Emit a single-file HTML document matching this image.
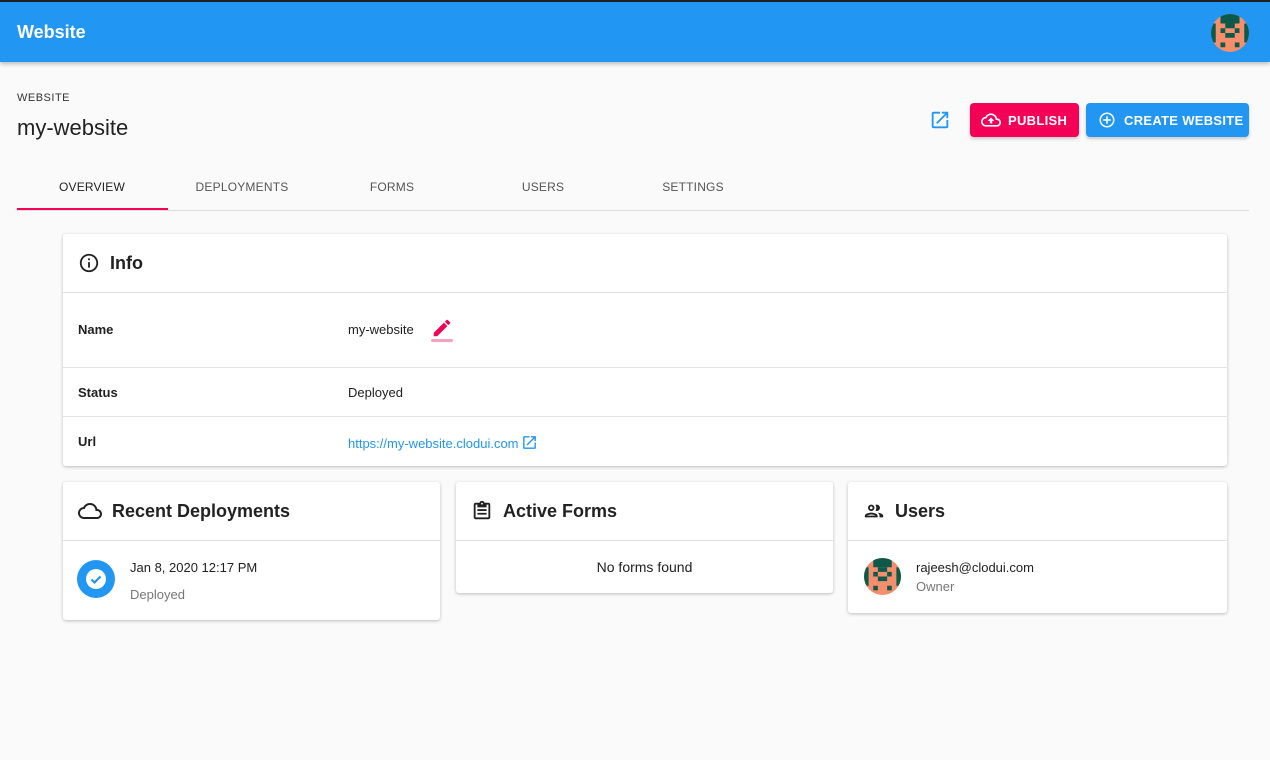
<!DOCTYPE html>
<html><head><style>
*{box-sizing:border-box;margin:0;padding:0}
body{width:1270px;height:760px;overflow:hidden;background:#fafafa;font-family:"Liberation Sans",Roboto,sans-serif;color:#212121;position:relative}
.bar{position:absolute;left:0;top:0;width:1270px;height:62px;background:#2196f3;border-top:2px solid #1f1f1f;box-shadow:0 2px 4px rgba(0,0,0,.25)}
.bar .t{position:absolute;left:17px;top:20px;color:#fff;font-size:18px;font-weight:bold}
.av{position:absolute;border-radius:50%;overflow:hidden}
.abs{position:absolute}
.btn{position:absolute;top:103px;height:34px;border-radius:4px;color:#fff;font-size:13px;font-weight:bold;letter-spacing:.3px;white-space:nowrap;display:flex;align-items:center;box-shadow:0 2px 3px rgba(0,0,0,.2)}
.tab{position:absolute;top:180px;width:150px;text-align:center;font-size:12px;color:#555;letter-spacing:.2px}
.card{position:absolute;background:#fff;box-shadow:0 1px 3px rgba(0,0,0,.25);border-radius:3px}
.hd{height:59px;border-bottom:1px solid #e4e4e4;display:flex;align-items:center;padding-left:15px;font-size:18px;font-weight:bold;color:#222}
.hd svg{margin-right:10px}
.row{position:absolute;left:0;width:100%;border-bottom:1px solid #e4e4e4;font-size:13px}
.row b{position:absolute;left:15px}
.row span{position:absolute;left:285px}
</style></head><body>
<div class="bar"><div class="t">Website</div>
<svg class="av" style="left:1211px;top:12px" width="38" height="38" viewBox="0 0 8 8"><rect width="8" height="8" fill="#f58e6c"/><g fill="#0e5a4a"><rect x="2" y="0" width="4" height="2"/><rect x="3" y="2" width="2" height="1"/><rect x="2" y="3" width="1" height="1"/><rect x="5" y="3" width="1" height="1"/><rect x="3" y="4" width="2" height="1"/><rect x="0" y="2" width="1" height="4"/><rect x="7" y="2" width="1" height="4"/><rect x="2" y="6" width="1" height="1"/><rect x="5" y="6" width="1" height="1"/></g></svg></div>
<div class="abs" style="left:17px;top:92px;font-size:11px;letter-spacing:.5px;color:#333">WEBSITE</div>
<div class="abs" style="left:17px;top:115px;font-size:22px;color:#222">my-website</div>
<svg class="abs" style="left:929px;top:109px" width="22" height="22" viewBox="0 0 24 24"><path fill="#2196f3" d="M19 19H5V5h7V3H5a2 2 0 00-2 2v14a2 2 0 002 2h14a2 2 0 002-2v-7h-2v7zM14 3v2h3.6l-9.8 9.8 1.4 1.4L19 6.4V10h2V3h-7z"/></svg>
<div class="btn" style="left:970px;width:109px;background:#f50057"><svg style="margin:0 7px 0 11px" width="20" height="20" viewBox="0 0 24 24"><path fill="#fff" d="M19.35 10.04A7.49 7.49 0 0012 4C9.11 4 6.6 5.64 5.35 8.04A5.994 5.994 0 000 14c0 3.31 2.69 6 6 6h13c2.760 0 5-2.24 5-5 0-2.64-2.05-4.78-4.65-4.96zM19 18H6c-2.21 0-4-1.79-4-4s1.79-4 4-4h.71C7.37 7.69 9.48 6 12 6a5.5 5.5 0 015.5 5.5v.5H19c1.66 0 3 1.34 3 3s-1.34 3-3 3zM8 13h2.55v3h2.9v-3H16l-4-4z"/></svg>PUBLISH</div>
<div class="btn" style="left:1086px;width:163px;background:#2196f3"><svg style="margin:0 8px 0 12px" width="18" height="18" viewBox="0 0 24 24"><path fill="#fff" d="M13 7h-2v4H7v2h4v4h2v-4h4v-2h-4V7zm-1-5C6.48 2 2 6.480 2 12s4.48 10 10 10 10-4.48 10-10S17.52 2 12 2zm0 18c-4.41 0-8-3.59-8-8s3.59-8 8-8 8 3.59 8 8-3.59 8-8 8z"/></svg>CREATE WEBSITE</div>
<div class="tab" style="left:17px;color:#222">OVERVIEW</div>
<div class="tab" style="left:167px">DEPLOYMENTS</div>
<div class="tab" style="left:317px">FORMS</div>
<div class="tab" style="left:468px">USERS</div>
<div class="tab" style="left:618px">SETTINGS</div>
<div class="abs" style="left:17px;top:210px;width:1232px;height:1px;background:#ddd"></div>
<div class="abs" style="left:17px;top:208px;width:151px;height:2px;background:#f50057"></div>

<div class="card" style="left:63px;top:234px;width:1164px;height:232px">
<div class="hd"><svg width="22" height="22" viewBox="0 0 24 24"><path fill="#222" d="M11 7h2v2h-2zm0 4h2v6h-2zm1-9C6.48 2 2 6.48 2 12s4.48 10 10 10 10-4.48 10-10S17.52 2 12 2zm0 18c-4.41 0-8-3.59-8-8s3.59-8 8-8 8 3.59 8 8-3.59 8-8 8z"/></svg>Info</div>
<div class="row" style="top:59px;height:75px"><b style="top:29px">Name</b><span style="top:29px">my-website</span>
<svg class="abs" style="left:368px;top:24px" width="22" height="22" viewBox="0 0 24 24"><path fill="#f50057" d="M3 17.25V21h3.75L17.81 9.94l-3.75-3.75L3 17.25zM20.71 7.04a1 1 0 000-1.41l-2.34-2.34a1 1 0 00-1.41 0l-1.83 1.83 3.75 3.75 1.83-1.830z"/></svg>
<div class="abs" style="left:368px;top:46px;width:22px;height:3px;background:#f7a1c0;border-radius:2px"></div></div>
<div class="row" style="top:134px;height:49px"><b style="top:17px">Status</b><span style="top:17px">Deployed</span></div>
<div class="row" style="top:183px;height:49px;border:none"><b style="top:17px">Url</b><span style="top:17px;color:#2196f3">https://my-website.clodui.com<svg style="vertical-align:-3px;margin-left:2px" width="17" height="17" viewBox="0 0 24 24"><path fill="#2196f3" d="M19 19H5V5h7V3H5a2 2 0 00-2 2v14a2 2 0 002 2h14a2 2 0 002-2v-7h-2v7zM14 3v2h3.6l-9.8 9.8 1.4 1.4L19 6.4V10h2V3h-7z"/></svg></span></div>
</div>

<div class="card" style="left:63px;top:482px;width:377px;height:138px">
<div class="hd"><svg width="24" height="24" viewBox="0 0 24 24"><path fill="#222" d="M19.35 10.04A7.49 7.49 0 0012 4C9.11 4 6.6 5.64 5.35 8.04A5.994 5.994 0 000 14c0 3.31 2.69 6 6 6h13c2.76 0 5-2.24 5-5 0-2.64-2.05-4.78-4.65-4.96zM19 18H6c-2.21 0-4-1.79-4-4s1.79-4 4-4h.71C7.37 7.69 9.48 6 12 6a5.5 5.5 0 015.5 5.5v.5H19c1.66 0 3 1.34 3 3s-1.34 3-3 3z"/></svg>Recent Deployments</div>
<svg class="abs" style="left:14px;top:78px" width="38" height="38" viewBox="0 0 38 38"><circle cx="19" cy="19" r="19" fill="#2196f3"/><circle cx="19" cy="19" r="10" fill="#fff"/><path d="M14.5 19.5l3 3 6-6" stroke="#2196f3" stroke-width="2.2" fill="none"/></svg>
<div class="abs" style="left:67px;top:78px;font-size:13px">Jan 8, 2020 12:17 PM</div>
<div class="abs" style="left:67px;top:105px;font-size:13px;color:#777">Deployed</div>
</div>

<div class="card" style="left:456px;top:482px;width:377px;height:111px">
<div class="hd"><svg width="22" height="22" viewBox="0 0 24 24"><path fill="#222" d="M19 3h-4.18C14.4 1.84 13.3 1 12 1s-2.4.84-2.82 2H5c-1.1 0-2 .9-2 2v14c0 1.1.9 2 2 2h14c1.1 0 2-.9 2-2V5c0-1.1-.9-2-2-2zm-7 0c.55 0 1 .45 1 1s-.45 1-1 1-1-.45-1-1 .45-1 1-1zm7 16H5V5h2v3h10V5h2v14zM7 10h10v2H7zm0 4h10v2H7z"/></svg>Active Forms</div>
<div style="text-align:center;font-size:14px;margin-top:18px">No forms found</div>
</div>

<div class="card" style="left:848px;top:482px;width:379px;height:131px">
<div class="hd"><svg width="22" height="22" viewBox="0 0 24 24"><path fill="#222" d="M9 13.75c-2.34 0-7 1.17-7 3.5V19h14v-1.75c0-2.33-4.66-3.5-7-3.5zM4.34 17c.84-.58 2.87-1.25 4.66-1.25s3.82.67 4.66 1.25H4.34zM9 12c1.93 0 3.5-1.57 3.5-3.5S10.93 5 9 5 5.5 6.57 5.5 8.5 7.07 12 9 12zm0-5c.83 0 1.5.67 1.5 1.5S9.83 10 9 10s-1.5-.67-1.5-1.5S8.17 7 9 7zm7.04 6.81c1.16.84 1.96 1.96 1.96 3.44V19h4v-1.75c0-2.02-3.5-3.17-5.96-3.44zM15 12c1.93 0 3.5-1.57 3.5-3.5S16.93 5 15 5c-.54 0-1.04.13-1.5.35.63.89 1 1.98 1 3.15s-.37 2.26-1 3.15c.46.22.96.35 1.5.35z"/></svg>Users</div>
<svg class="av" style="left:16px;top:76px" width="37" height="37" viewBox="0 0 8 8"><rect width="8" height="8" fill="#f58e6c"/><g fill="#0e5a4a"><rect x="2" y="0" width="4" height="2"/><rect x="3" y="2" width="2" height="1"/><rect x="2" y="3" width="1" height="1"/><rect x="5" y="3" width="1" height="1"/><rect x="3" y="4" width="2" height="1"/><rect x="0" y="2" width="1" height="4"/><rect x="7" y="2" width="1" height="4"/><rect x="2" y="6" width="1" height="1"/><rect x="5" y="6" width="1" height="1"/></g></svg>
<div class="abs" style="left:68px;top:78px;font-size:13px">rajeesh@clodui.com</div>
<div class="abs" style="left:68px;top:97px;font-size:13px;color:#777">Owner</div>
</div>
</body></html>
